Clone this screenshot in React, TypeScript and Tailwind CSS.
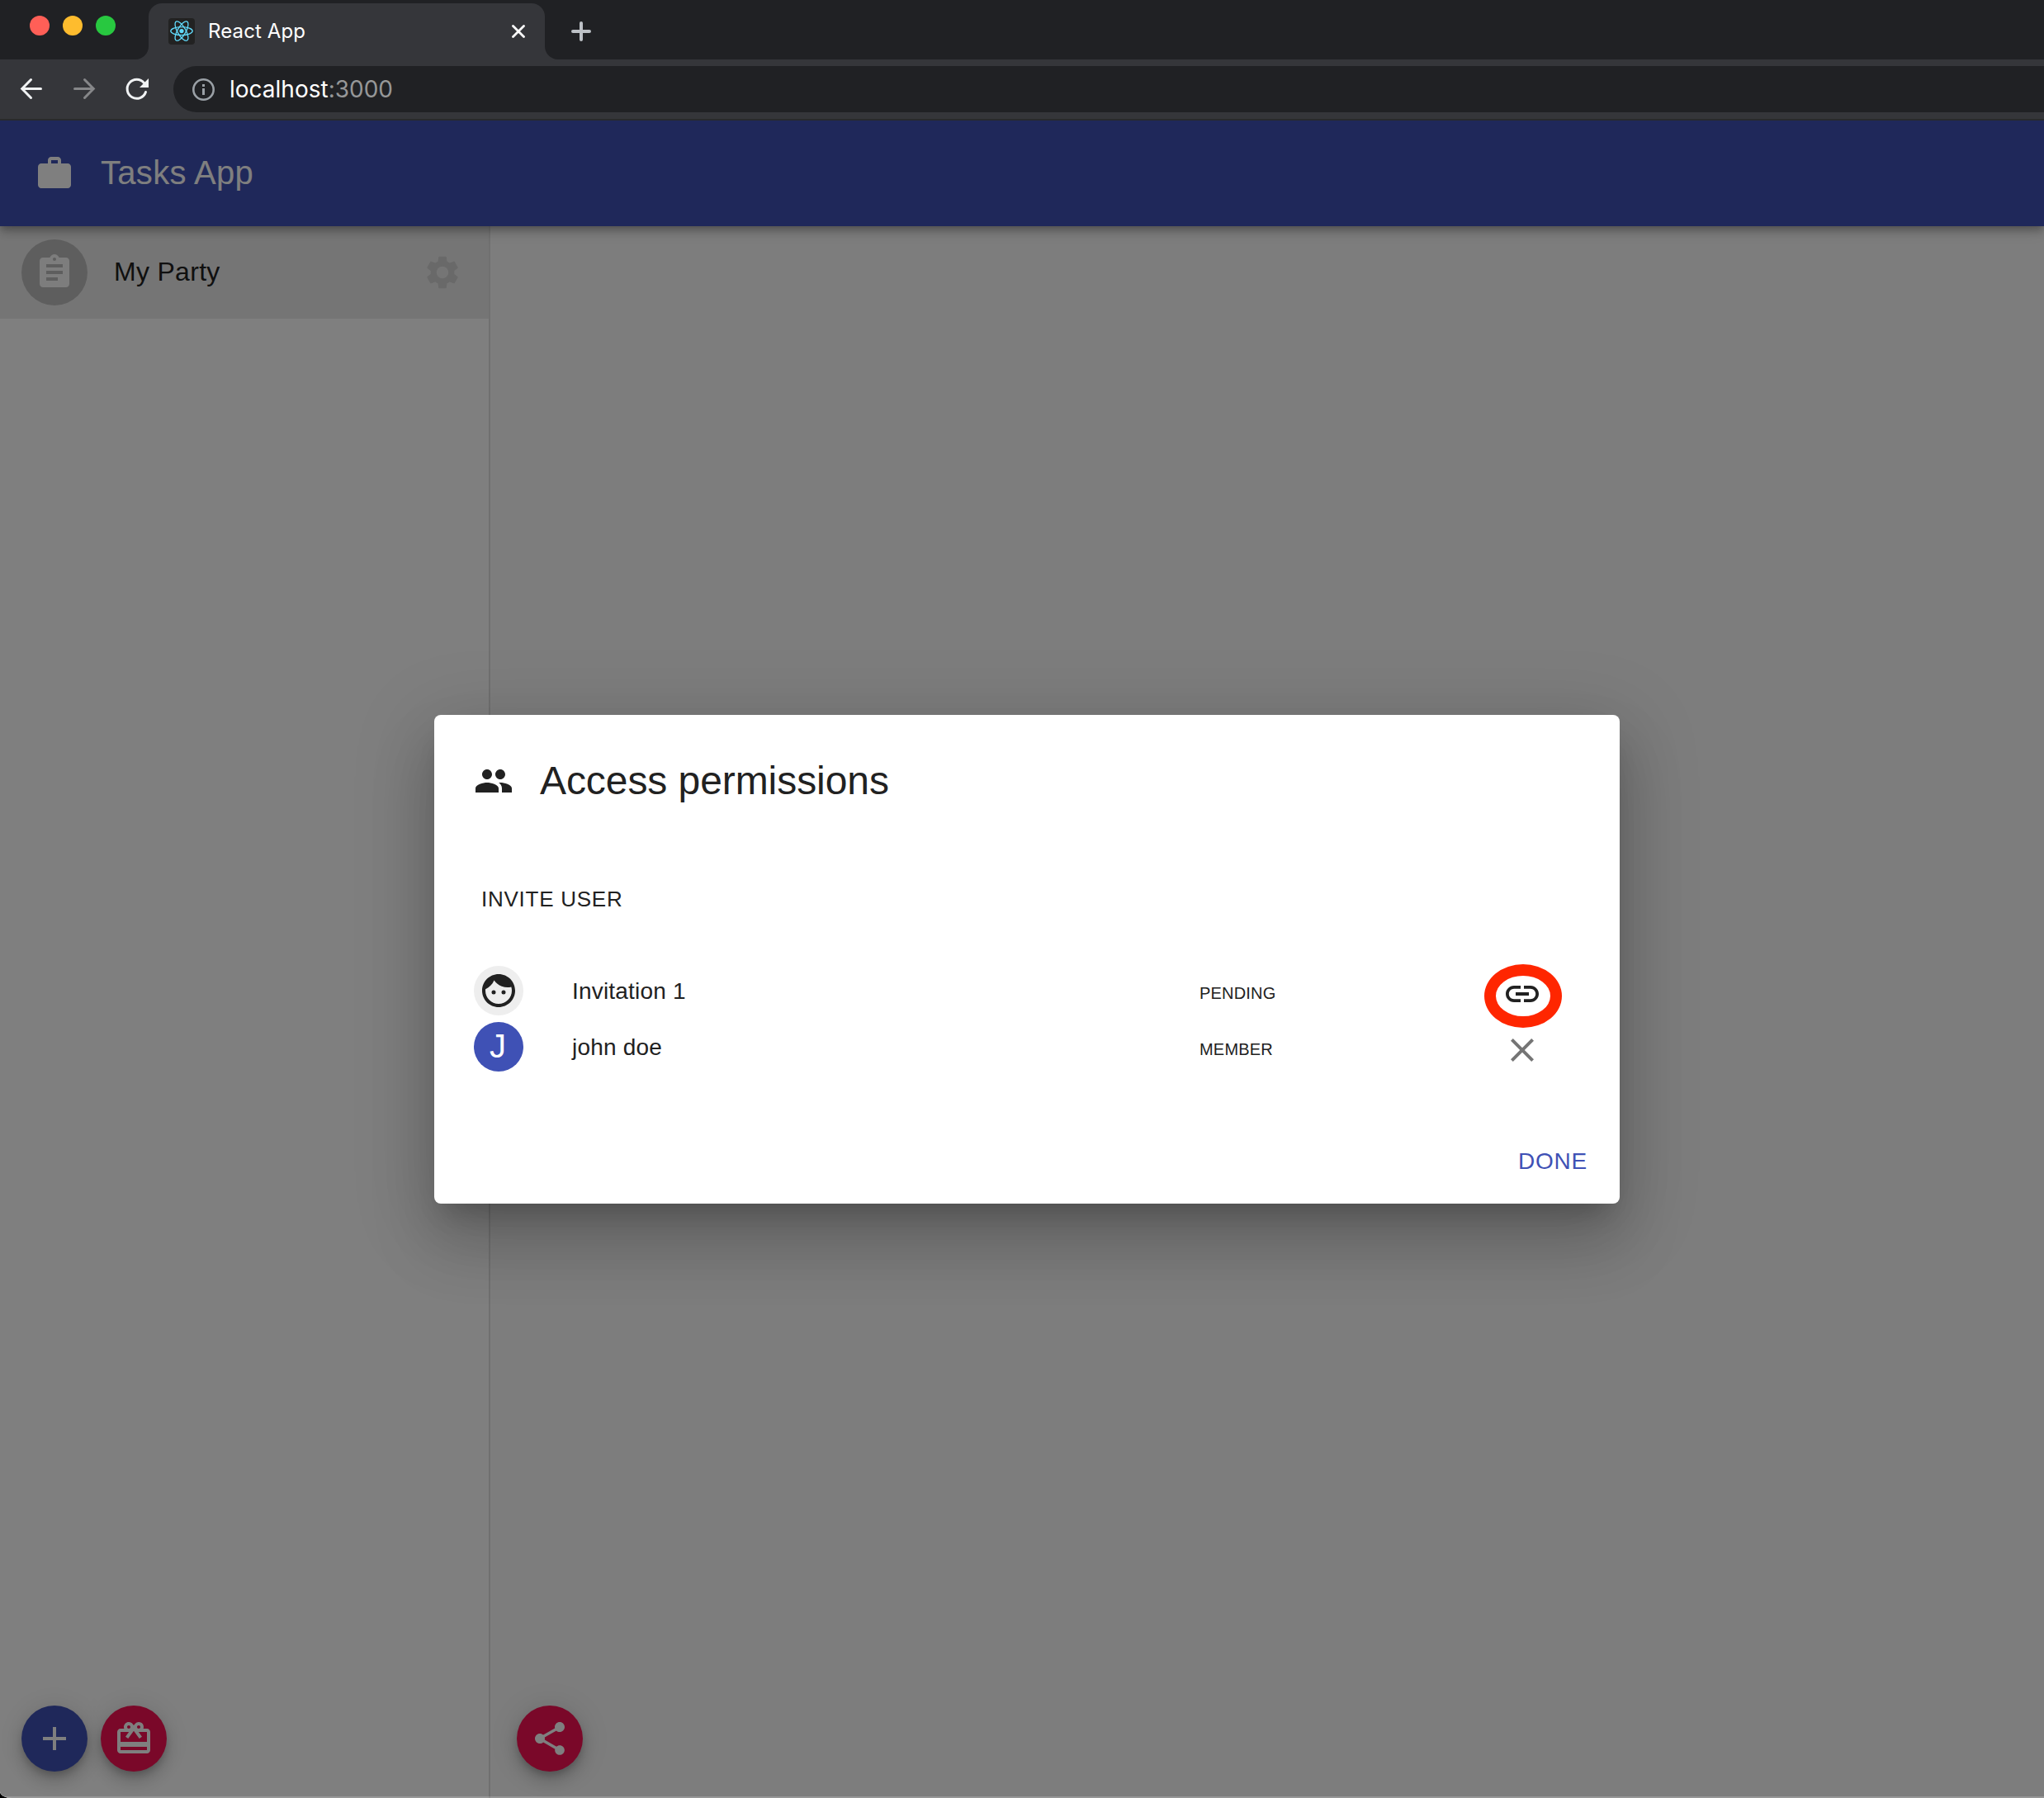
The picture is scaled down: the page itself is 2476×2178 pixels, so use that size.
import React from "react";
import {
  MdWork,
  MdAssignment,
  MdSettings,
  MdPeople,
  MdFace,
  MdLink,
  MdClose,
  MdAdd,
  MdShare,
  MdCardGiftcard,
} from "react-icons/md";

const fabShadow =
  "shadow-[0_6px_10px_-2px_rgba(0,0,0,0.2),0_12px_20px_0_rgba(0,0,0,0.14),0_2px_36px_0_rgba(0,0,0,0.12)]";

function ReactLogo() {
  return (
    <svg className="size-8 shrink-0 rounded-[4px] bg-[#222222]" viewBox="0 0 32 32" fill="none" stroke="#61dafb" strokeWidth="1.3">
      <circle cx="16" cy="15.6" r="2.6" fill="#61dafb" stroke="none" />
      <ellipse cx="16" cy="15.6" rx="13.2" ry="5" />
      <ellipse cx="16" cy="15.6" rx="13.2" ry="5" transform="rotate(60 16 15.6)" />
      <ellipse cx="16" cy="15.6" rx="13.2" ry="5" transform="rotate(120 16 15.6)" />
    </svg>
  );
}

function TabStrip() {
  return (
    <div className="flex h-[72px] bg-[#35363a]">
      <div className="flex h-full w-[180px] bg-[#35363a]">
        <div className="flex h-full w-full gap-4 rounded-br-[16px] bg-[#202124] pt-[19px] pl-9">
          <span className="size-6 rounded-full bg-[#ff5f57]" />
          <span className="size-6 rounded-full bg-[#febc2e]" />
          <span className="size-6 rounded-full bg-[#28c840]" />
        </div>
      </div>
      <div className="h-full w-[480px] bg-[#202124] pt-1">
        <div className="flex h-full items-center rounded-t-[16px] bg-[#35363a] pr-6 pl-6">
          <ReactLogo />
          <span className="ml-4 grow text-[24px] tracking-[0.005em] text-white">React App</span>
          <svg className="size-4" viewBox="0 0 16 16" stroke="#fff" strokeWidth="2.8" strokeLinecap="round">
            <path d="M1.5 1.5 14.5 14.5M14.5 1.5 1.5 14.5" />
          </svg>
        </div>
      </div>
      <div className="flex h-full grow items-center rounded-bl-[16px] bg-[#202124] pt-1 pl-8">
        <svg className="size-6" viewBox="0 0 24 24" stroke="#bdc1c6" strokeWidth="4" strokeLinecap="round">
          <path d="M12 2v20M2 12h20" />
        </svg>
      </div>
    </div>
  );
}

function AddressBar() {
  return (
    <div className="flex h-[74px] items-start border-b-2 border-[#292a2c] bg-[#35363a] pt-2">
      <div className="flex h-14 w-[210px] items-center pl-[22px]">
        <svg className="size-8" viewBox="0 0 32 32" fill="none" stroke="#f1f3f4" strokeWidth="3" strokeLinecap="round">
          <path d="M27.5 15.5H5M15.5 4.5 4.7 15.5l10.8 11" />
        </svg>
        <svg className="ml-8 size-8" viewBox="0 0 32 32" fill="none" stroke="#868789" strokeWidth="3" strokeLinecap="round">
          <path d="M4.5 15.5H27M16.5 4.5l10.800 11-10.800 11" />
        </svg>
        <svg className="ml-8 size-8" viewBox="0 0 32 32" fill="none" stroke="#f1f3f4" strokeWidth="3">
          <path d="M26.5 19.5A11.500 11.500 0 1 1 24.500 8.500" strokeLinecap="round" />
          <path d="M30 3v11H19z" fill="#f1f3f4" stroke="none" />
        </svg>
      </div>
      <div className="flex h-14 grow items-center rounded-l-full bg-[#202124] pl-[22px]">
        <svg className="size-7" viewBox="0 0 28 28" fill="none" stroke="#9aa0a6">
          <circle cx="14.5" cy="14.5" r="12.2" strokeWidth="2.6" />
          <path d="M14.5 8v3M14.5 13v8" strokeWidth="3" />
        </svg>
        <span className="ml-[18px] text-[28px] text-white">
          localhost<span className="text-[#969798]">:3000</span>
        </span>
      </div>
    </div>
  );
}

function Fab({ className, children }: { className: string; children: React.ReactNode }) {
  return (
    <div className={`flex size-20 items-center justify-center rounded-full text-white ${fabShadow} ${className}`}>
      {children}
    </div>
  );
}

function MemberRow({
  avatar,
  name,
  role,
  action,
}: {
  avatar: React.ReactNode;
  name: string;
  role: string;
  action: React.ReactNode;
}) {
  return (
    <div className="flex h-[60px] items-center">
      <div className="w-[119px]">{avatar}</div>
      <div className="w-[760px] pt-0.5 text-[28px] tracking-[0.007em]">{name}</div>
      <div className="w-[367px] pt-[6px] text-[20px] tracking-[0.01em]">{role}</div>
      <div className="relative pt-2">{action}</div>
    </div>
  );
}

function AccessDialog() {
  return (
    <div className="flex h-[592px] w-[1436px] flex-col rounded-[8px] bg-white pt-8 text-[#212121] shadow-[0_22px_30px_-14px_rgba(0,0,0,0.2),0_48px_76px_6px_rgba(0,0,0,0.14),0_18px_92px_16px_rgba(0,0,0,0.12)]">
      <div className="flex h-24 items-center gap-8 pl-12">
        <MdPeople className="size-12" />
        <h2 className="text-[48px] tracking-[-0.0015em]">Access permissions</h2>
      </div>
      <div className="mt-16 flex h-[62px] items-center pl-[57px] text-[26px] tracking-[0.02857em]">INVITE USER</div>
      <div className="mt-[50px] flex flex-col gap-2 pl-12">
        <MemberRow
          avatar={
            <div className="flex size-[60px] items-center justify-center rounded-full bg-[#eeeeee]">
              <MdFace className="size-12" />
            </div>
          }
          name="Invitation 1"
          role="PENDING"
          action={
            <>
              <MdLink className="size-12" />
              <div className="absolute top-[-4px] left-[-22px] h-[77px] w-[94px] rounded-[50%] border-[14px] border-[#ff2600]" />
            </>
          }
        />
        <MemberRow
          avatar={
            <div className="flex size-[60px] items-center justify-center rounded-full bg-[#3f51b5] pr-0.5 pb-0.5 text-[40px] text-white">
              J
            </div>
          }
          name="john doe"
          role="MEMBER"
          action={<MdClose className="size-12 text-[#757575]" />}
        />
      </div>
      <div className="mt-[77px] flex h-16 items-center justify-end pr-[39px] text-[28px] tracking-[0.02857em] text-[#3f51b5]">
        DONE
      </div>
    </div>
  );
}

export default function App() {
  return (
    <div className="flex h-[2178px] w-[2476px] flex-col overflow-hidden bg-black font-[Inter,sans-serif]">
      <TabStrip />
      <AddressBar />
      <div className="relative flex grow flex-col overflow-hidden rounded-bl-[14px_8px] bg-[#fafafa] font-['Liberation_Sans',Arial,sans-serif] text-[#212121]">
        <header className="z-10 flex h-32 shrink-0 items-center bg-[#3f51b5] pl-[42px] text-white shadow-[0_4px_8px_-2px_rgba(0,0,0,0.2),0_8px_10px_0_rgba(0,0,0,0.14),0_2px_20px_0_rgba(0,0,0,0.12)]">
          <MdWork className="size-12" />
          <h1 className="ml-8 pb-[3px] text-[40px] tracking-[0.0075em]">Tasks App</h1>
        </header>
        <div className="flex grow">
          <aside className="flex w-[594px] flex-col justify-between border-r-2 border-[#e0e0e0] bg-white">
            <div className="flex h-28 items-center bg-[#ebebeb] pr-8 pl-[26px]">
              <div className="flex size-20 items-center justify-center rounded-full bg-[#bdbdbd]">
                <MdAssignment className="size-12 text-[#fafafa]" />
              </div>
              <span className="ml-8 grow pb-0.5 text-[32px] tracking-[0.00938em]">My Party</span>
              <MdSettings className="size-12 text-[#d2d2d2]" />
            </div>
            <div className="flex gap-4 pb-8 pl-[26px]">
              <Fab className="bg-[#3f51b5]">
                <MdAdd className="size-12" />
              </Fab>
              <Fab className="bg-[#f41052]">
                <MdCardGiftcard className="size-12" />
              </Fab>
            </div>
          </aside>
          <main className="flex grow items-end pb-8 pl-8">
            <Fab className="bg-[#f41052]">
              <MdShare className="size-12" />
            </Fab>
          </main>
        </div>
        <div className="absolute inset-0 z-20 flex items-center justify-center border-b-2 border-white/20 bg-black/50 pt-0.5 pl-3">
          <AccessDialog />
        </div>
      </div>
    </div>
  );
}
